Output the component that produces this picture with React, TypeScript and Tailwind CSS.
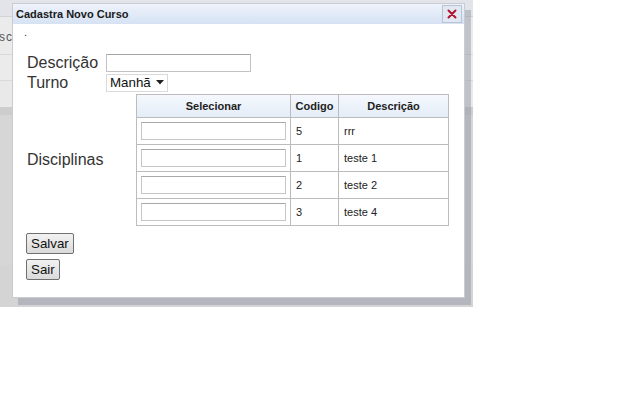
import React from "react";

const rows = [
  { c: "5", d: "rrr" },
  { c: "1", d: "teste 1" },
  { c: "2", d: "teste 2" },
  { c: "3", d: "teste 4" },
];

export default function App() {
  return (
    <div className="w-[640px] h-[400px] bg-white" style={{ fontFamily: '"Liberation Sans", Arial, sans-serif' }}>
      <div className="relative w-[473px] h-[307px] bg-[#d4d4d4] overflow-hidden">
        <div className="h-[17px] bg-[#e2e4e9] border-b border-[#d0d3da]" />
        <div className="h-[38px] bg-[#ebebeb] border-b border-[#d9d9d9] flex items-center text-[12px] text-[#555] tracking-[1px]">
          <span className="-ml-[1px] mt-[2px]">sc</span>
        </div>
        <div className="h-[26px] bg-[#ebebeb] border-b border-[#d9d9d9]" />
        <div className="h-[26px] bg-[#e9e9e9]" />
        <div className="h-[8px] bg-[#cdcdcd]" />
        <div className="h-[150px] bg-[#d6d6d6]" />

        <div className="absolute left-[12px] top-[3px] w-[453px] h-[295px] bg-white border border-[#c9ccd3] shadow-[6px_7px_0_rgba(140,146,160,0.45)] flex flex-col">
          <div className="h-[20px] shrink-0 flex items-center justify-between bg-gradient-to-b from-[#eef3fb] to-[#d6e2f3] pl-[3px] pr-[2px]">
            <span className="text-[11px] font-bold text-[#1a1a1a]">Cadastra Novo Curso</span>
            <div className="w-[20px] h-[18px] border border-[#b9c3d3] bg-[#e2e8f1] flex items-center justify-center">
              <svg width="10" height="10" viewBox="0 0 10 10">
                <path d="M1.5 1.5 L8.5 8.5 M8.5 1.5 L1.5 8.5" stroke="#b0142e" strokeWidth="2" strokeLinecap="round" />
              </svg>
            </div>
          </div>

          <div className="h-[28px] pl-[11px] pt-[3px] text-[11px] text-[#333] leading-none">.</div>

          <div className="pl-[13px]">
            <div className="h-[21px] flex items-center">
              <span className="w-[80px] pl-[1px] text-[16px] text-[#333] leading-none">Descrição</span>
              <div className="w-[145px] h-[18px] border border-[#c3c3c3] border-t-[#a5a5a5] bg-white" />
            </div>
            <div className="h-[19px] flex items-center">
              <span className="w-[80px] pl-[1px] text-[16px] text-[#333] leading-none">Turno</span>
              <div className="w-[62px] h-[18px] border border-[#dadada] bg-white flex items-center pl-[3px] gap-[5px] text-[13.33px] text-[#111]">
                <span>Manhã</span>
                <svg width="8" height="5" viewBox="0 0 8 5">
                  <path d="M0 0 L8 0 L4 4.5 Z" fill="#222" />
                </svg>
              </div>
            </div>

            <div className="mt-[2px] flex items-center">
              <span className="w-[110px] pl-[1px] text-[16px] text-[#333] leading-none">Disciplinas</span>
              <table className="border-collapse text-[11px] text-[#222]">
                <thead>
                  <tr className="h-[23px] bg-gradient-to-b from-[#f5f8fd] to-[#e3ecf7]">
                    <th className="w-[154px] border border-[#bcbcbc] font-bold text-center">Selecionar</th>
                    <th className="w-[48px] border border-[#bcbcbc] font-bold text-center">Codigo</th>
                    <th className="w-[110px] border border-[#bcbcbc] font-bold text-center">Descrição</th>
                  </tr>
                </thead>
                <tbody>
                  {rows.map((r) => (
                    <tr key={r.c} className="h-[27px]">
                      <td className="border border-[#bcbcbc] pl-[4px]">
                        <div className="w-[145px] h-[18px] border border-[#c6c6c6] border-t-[#a8a8a8] bg-white" />
                      </td>
                      <td className="border border-[#bcbcbc] pl-[5px]">{r.c}</td>
                      <td className="border border-[#bcbcbc] pl-[5px]">{r.d}</td>
                    </tr>
                  ))}
                </tbody>
              </table>
            </div>

            <div className="mt-[7px] flex flex-col items-start gap-[5px]">
              <button className="h-[21px] px-[4px] border border-[#707070] rounded-[2px] bg-gradient-to-b from-[#f2f2f2] to-[#dadada] text-[13.33px] text-[#111] leading-none">
                Salvar
              </button>
              <button className="h-[21px] px-[4px] border border-[#707070] rounded-[2px] bg-gradient-to-b from-[#f2f2f2] to-[#dadada] text-[13.33px] text-[#111] leading-none">
                Sair
              </button>
            </div>
          </div>
        </div>
      </div>
    </div>
  );
}
